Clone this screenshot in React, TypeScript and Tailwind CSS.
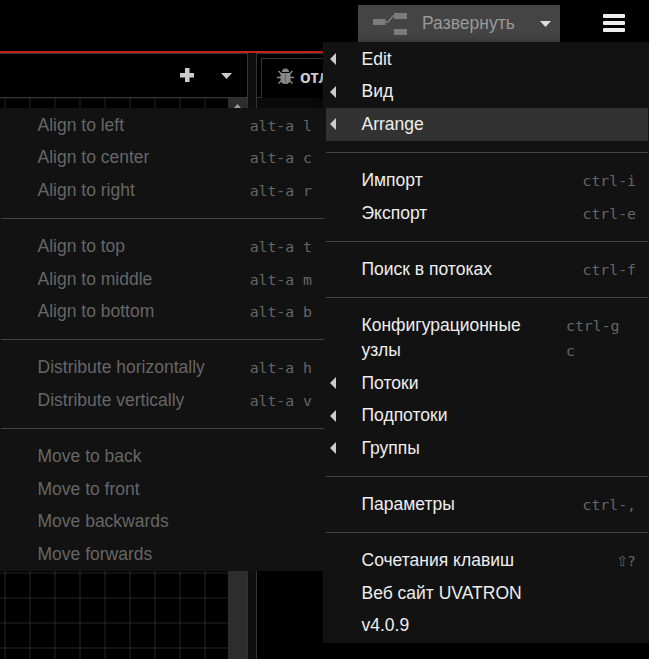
import React from "react";

type Item = { label: string; keys?: string; shift?: boolean; arrow?: boolean; active?: boolean; wrap?: boolean };

const mainGroups: Item[][] = [
  [
    { label: "Edit", arrow: true },
    { label: "Вид", arrow: true },
    { label: "Arrange", arrow: true, active: true },
  ],
  [
    { label: "Импорт", keys: "ctrl-i" },
    { label: "Экспорт", keys: "ctrl-e" },
  ],
  [{ label: "Поиск в потоках", keys: "ctrl-f" }],
  [
    { label: "Конфигурационные узлы", keys: "ctrl-g c", wrap: true },
    { label: "Потоки", arrow: true },
    { label: "Подпотоки", arrow: true },
    { label: "Группы", arrow: true },
  ],
  [{ label: "Параметры", keys: "ctrl-," }],
  [
    { label: "Сочетания клавиш", keys: "?", shift: true },
    { label: "Веб сайт UVATRON" },
    { label: "v4.0.9" },
  ],
];

const arrangeGroups: Item[][] = [
  [
    { label: "Align to left", keys: "alt-a l" },
    { label: "Align to center", keys: "alt-a c" },
    { label: "Align to right", keys: "alt-a r" },
  ],
  [
    { label: "Align to top", keys: "alt-a t" },
    { label: "Align to middle", keys: "alt-a m" },
    { label: "Align to bottom", keys: "alt-a b" },
  ],
  [
    { label: "Distribute horizontally", keys: "alt-a h" },
    { label: "Distribute vertically", keys: "alt-a v" },
  ],
  [
    { label: "Move to back" },
    { label: "Move to front" },
    { label: "Move backwards" },
    { label: "Move forwards" },
  ],
];

function Keys({ text, wrap, shift }: { text: string; wrap?: boolean; shift?: boolean }) {
  return (
    <span
      className={`shrink-0 font-['DejaVu_Sans_Mono',monospace] text-[14.8px] leading-[25px] text-[#666] ${
        wrap ? "w-[70px]" : "whitespace-pre"
      }`}
    >
      {shift && <span className="-mr-px font-['DejaVu_Sans',sans-serif] text-[14px]">⇧</span>}
      {text}
    </span>
  );
}

function MenuRow({ item, disabled }: { item: Item; disabled?: boolean }) {
  return (
    <div
      className={`flex items-start py-[3.75px] pr-3 ${item.active ? "bg-[#323232]" : ""} ${
        item.wrap ? "h-[57.5px]" : "h-[32.5px]"
      } ${disabled ? "pl-[36.5px] text-[#666]" : "pl-1 text-[#eee]"}`}
    >
      {!disabled && (
        <span className="flex h-[25px] w-[31.5px] shrink-0 items-center">
          {item.arrow && (
            <svg width="6" height="12" viewBox="0 0 6 12" className={item.active ? "fill-[#ccc]" : "fill-[#ccc]"}>
              <path d="M6 0v12L0 6z" />
            </svg>
          )}
        </span>
      )}
      <span
        className={`flex-1 text-[17.5px] leading-[25px] ${item.wrap ? "pr-6" : "whitespace-nowrap"}`}
      >
        {item.label}
      </span>
      {item.keys && <Keys text={item.keys} wrap={item.wrap} shift={item.shift} />}
    </div>
  );
}

function Menu({ groups, disabled }: { groups: Item[][]; disabled?: boolean }) {
  return (
    <>
      {groups.map((group, g) => (
        <React.Fragment key={g}>
          {g > 0 && <div className="my-[11.375px] h-px bg-[#444]" />}
          {group.map((item) => (
            <MenuRow key={item.label} item={item} disabled={disabled} />
          ))}
        </React.Fragment>
      ))}
    </>
  );
}

function DeployIcon() {
  return (
    <svg width="34" height="23" viewBox="0 0 34 23" className="mt-0.5">
      <path d="M12 9h3l5-6h2" fill="none" stroke="#7c7c7c" strokeWidth="1.6" />
      <path d="M0 6h12.500v6H0zM21 0h13v6H21zM21 16h13v6H21z" fill="#7c7c7c" />
    </svg>
  );
}

function Bug() {
  return (
    <svg width="17" height="17" viewBox="0 0 17 17">
      <path d="M5 4a3.500 3.500 0 0 1 7 0z" fill="#888" />
      <path d="M3.500 5H8v11C5 16 3.500 13.500 3.500 11zM9 5h4.500v6C13.500 13.500 12 16 9 16z" fill="#888" />
      <path d="M8 5h1v11H8z" fill="#666" />
      <path d="M1.500 3l3 3M15.500 3l-3 3M0 9.500h4M13 9.500h4M1.500 15.500l3-3M15.500 15.500l-3-3" stroke="#888" strokeWidth="1.500" />
    </svg>
  );
}

export default function App() {
  return (
    <div className="relative flex h-[659px] w-[649px] flex-col overflow-hidden bg-black font-['Liberation_Sans',Arial,sans-serif]">
      <header className="flex h-[53px] shrink-0 items-start border-b-2 border-[#c7201d] pl-[358px]">
        <div className="mt-[5px] flex h-[37px] w-[202px] items-center bg-[#444] pl-[15px]">
          <DeployIcon />
          <span className="ml-[15px] w-[94px] whitespace-nowrap text-[17.5px] text-[#999]">Развернуть</span>
          <svg width="11" height="6" viewBox="0 0 11 6" className="ml-[24px] fill-[#ddd]">
            <path d="M0 0h11L5.500 6z" />
          </svg>
        </div>
        <div className="ml-[43px] mt-[14px] flex w-[22px] flex-col gap-[3px]">
          <span className="h-1 rounded-[1px] bg-[#eee]" />
          <span className="h-1 rounded-[1px] bg-[#eee]" />
          <span className="h-1 rounded-[1px] bg-[#eee]" />
        </div>
      </header>

      <div className="flex flex-1">
        <main className="flex w-[248px] flex-col border-r border-t border-[#333]">
          <div className="flex h-[44px] shrink-0 items-center border-b border-[#333] pl-[180px]">
            <svg width="14" height="14" viewBox="0 0 14 14" className="mb-px fill-[#ccc]">
              <path d="M5 0h4.500v5H14v4.500H9.500V14H5V9.500H0V5h5z" />
            </svg>
            <svg width="11" height="6" viewBox="0 0 11 6" className="ml-[27px] fill-[#ccc]">
              <path d="M0 0h11L5.500 6z" />
            </svg>
          </div>
          <div className="flex flex-1">
            <svg className="w-[228px]" height="561" viewBox="0 0 228 561">
              {Array.from({ length: 9 }, (_, i) => (
                <rect key={`v${i}`} x={4 + i * 25} y="0" width="2" height="561" fill="#fff" fillOpacity="0.07" />
              ))}
              {Array.from({ length: 23 }, (_, i) => (
                <rect key={`h${i}`} x="0" y={-1 + i * 25} width="228" height="2" fill="#fff" fillOpacity="0.07" />
              ))}
            </svg>
            <div className="flex flex-1 justify-center bg-[#2d2d2d] pt-[6px]">
              <svg width="9" height="5" viewBox="0 0 9 5" className="fill-[#999]">
                <path d="M4.500 0L9 5H0z" />
              </svg>
            </div>
          </div>
        </main>
        <div className="w-2 bg-[#0f0f0f]" />
        <aside className="flex flex-1 flex-col border-l border-t border-[#333]">
          <div className="flex h-[44px] shrink-0">
            <div className="w-1 border-b border-[#333]" />
            <div className="mt-1 flex flex-1 items-center border-l border-t border-[#333] pb-[5px] pl-[15px]">
              <Bug />
              <span className="ml-[6px] mt-[3px] text-[17.5px] font-bold text-[#ccc]">отладка</span>
            </div>
          </div>
          <div className="h-[10px] bg-[#0a0a0a]" />
        </aside>
      </div>

      <nav className="absolute left-[323px] top-[42px] h-[601px] w-[326px] bg-[#121212] pl-[3px] pr-px pt-px shadow-[0_0_10px_rgba(0,0,0,0.3)]">
        <Menu groups={mainGroups} />
      </nav>
      <nav className="absolute left-0 top-[108px] h-[463px] w-[326px] bg-[#121212] pl-px pr-[2px] pt-px">
        <Menu groups={arrangeGroups} disabled />
      </nav>
    </div>
  );
}
